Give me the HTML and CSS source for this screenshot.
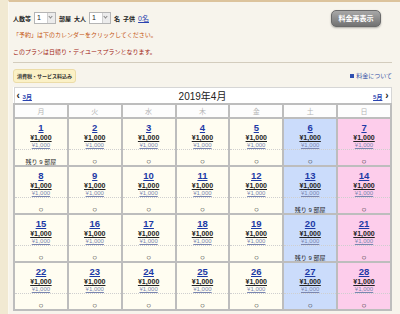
FILE: index.html
```html
<!DOCTYPE html>
<html lang="ja">
<head>
    <meta charset="UTF-8">
    <meta name="viewport" content="width=device-width, initial-scale=1.0">
    <title>宿泊カレンダー</title>
    <link rel="stylesheet" href="styles.css">
</head>
<body>
<div class="page">

    <div class="toolbar">
        <div class="guests">
            <span class="label">人数等</span>
            <span class="select"><span class="val">1</span><span class="arrow"></span></span>
            <span class="label">部屋</span>
            <span class="label">大人</span>
            <span class="select"><span class="val">1</span><span class="arrow"></span></span>
            <span class="label">名</span>
            <span class="label">子供</span>
            <a class="kids" href="#">0名</a>
        </div>
        <button class="refresh">料金再表示</button>
    </div>

    <p class="notice">「予約」は下のカレンダーをクリックしてください。</p>
    <p class="plan-note">このプランは日帰り・デイユースプランとなります。</p>

    <hr class="rule">

    <div class="cal-meta">
        <span class="tax-tag">消費税・サービス料込み</span>
        <a class="price-info" href="#"><span class="info-icon"></span>料金について</a>
    </div>

    <table class="calendar">
        <thead>
            <tr class="month-nav">
                <th colspan="7">
                    <div class="nav">
                        <span class="prev">&lsaquo; <a href="#">3月</a></span>
                        <span class="current">2019年4月</span>
                        <span class="next"><a href="#">5月</a> &rsaquo;</span>
                    </div>
                </th>
            </tr>
            <tr class="weekdays">
                <th>月</th><th>火</th><th>水</th><th>木</th><th>金</th><th>土</th><th>日</th>
            </tr>
        </thead>
        <tbody id="weeks"></tbody>
    </table>

</div>

<script>
    const rooms = { 1: '残り 9 部屋', 13: '残り 9 部屋', 20: '残り 9 部屋' };
    const tbody = document.getElementById('weeks');
    let html = '';
    for (let day = 1; day <= 28; day++) {
        const col = (day - 1) % 7;
        if (col === 0) html += '<tr>';
        let cls = 'weekday';
        if (col === 5) cls = 'sat';
        if (col === 6) cls = 'sun';
        const status = rooms[day]
            ? '<span class="left">' + rooms[day] + '</span>'
            : '<span class="ok">○</span>';
        html += '<td class="' + cls + '">' +
            '<div class="day-top">' +
            '<a class="num" href="#">' + day + '</a>' +
            '<a class="price" href="#">¥1,000</a>' +
            '<a class="price-sub" href="#">¥1,000</a>' +
            '</div>' +
            '<div class="status">' + status + '</div>' +
            '</td>';
        if (col === 6) html += '</tr>';
    }
    tbody.innerHTML = html;
</script>
</body>
</html>
```

FILE: styles.css
```css
body {
    margin: 0;
    padding: 0;
    background-color: #f1e9d2;
    font-family: 'Liberation Sans', 'Noto Sans CJK JP', sans-serif;
    color: #222;
}
.page {
    margin-left: 8px;
    border-left: 1px solid #fbf8f0;
    border-top: 2px solid #dcc39c;
    background-color: #f7f4ec;
    padding: 7px 8px 0 4px;
    min-height: 320px;
}
.toolbar {
    display: flex;
    justify-content: space-between;
    align-items: center;
    height: 18px;
}
.guests {
    display: flex;
    align-items: center;
    gap: 3px;
    font-size: 6px;
}
.label {
    color: #222;
    font-weight: bold;
}
.select {
    display: inline-flex;
    width: 22px;
    height: 12px;
    border: 1px solid #b5b5b5;
    background-color: #fff;
    box-sizing: border-box;
}
.select .val {
    flex: 1;
    font-size: 7px;
    line-height: 10px;
    padding-left: 2px;
}
.select .arrow {
    width: 7px;
    background-color: #ececec;
    border-left: 1px solid #d0d0d0;
    position: relative;
}
.select .arrow::after {
    content: '';
    position: absolute;
    left: 1px;
    top: 2px;
    width: 2px;
    height: 2px;
    border-right: 1px solid #888;
    border-bottom: 1px solid #888;
    transform: rotate(45deg);
}
.kids {
    color: #2a44b0;
    font-size: 7px;
}
.refresh {
    width: 50px;
    height: 17px;
    margin-right: 11px;
    padding: 0;
    border: 1px solid #6a6a6a;
    border-radius: 5px;
    background: linear-gradient(#a8a8a8, #727272);
    box-shadow: 0 1px 2px rgba(0, 0, 0, 0.3);
    color: #fff;
    font-family: 'Noto Sans CJK JP', sans-serif;
    font-size: 7px;
    font-weight: bold;
}
.notice, .plan-note {
    margin: 2px 0 0;
    font-size: 6px;
    line-height: 12px;
}
.notice {
    color: #c4530c;
}
.plan-note {
    margin-top: 5px;
    color: #a02010;
}
.rule {
    margin: 4px 0 0;
    border: none;
    border-top: 1px solid #d3ccbd;
}
.cal-meta {
    display: flex;
    justify-content: space-between;
    align-items: center;
    margin-top: 6px;
    height: 13px;
}
.tax-tag {
    display: inline-block;
    height: 12px;
    line-height: 12px;
    padding: 0 3px;
    border: 1px solid #ecdca8;
    border-radius: 3px;
    background-color: #fbf1c6;
    font-size: 5px;
    font-weight: bold;
    color: #333;
}
.price-info {
    display: flex;
    align-items: center;
    gap: 2px;
    font-size: 6px;
    color: #3a55a8;
    text-decoration: none;
}
.info-icon {
    width: 4px;
    height: 4px;
    background-color: #2f50b0;
}
.calendar {
    width: 100%;
    margin-top: 5px;
    border-collapse: collapse;
    table-layout: fixed;
    background-color: #fff;
}
.calendar th, .calendar td {
    padding: 0;
    border: 2px solid #bdbdbd;
    text-align: center;
    font-weight: normal;
}
.month-nav th {
    height: 15px;
    border: 1px solid #d6d6d6;
    background-color: #fff;
}
.nav {
    display: flex;
    justify-content: space-between;
    align-items: center;
    padding: 0 2px;
}
.prev, .next {
    font-size: 10px;
    font-weight: bold;
    color: #222;
}
.prev a, .next a {
    font-size: 6px;
    color: #2a44b0;
}
.current {
    font-size: 10px;
    color: #222;
}
.weekdays th {
    height: 12px;
    font-size: 7px;
    color: #b5b5b5;
    background-color: #fdfdfd;
}
.weekday {
    background-color: #fffdf1;
}
.sat {
    background-color: #cbdcfb;
}
.sun {
    background-color: #fdcdeb;
}
.day-top {
    height: 27px;
    padding-top: 3px;
    border-bottom: 1px dotted #cfcfcf;
    display: flex;
    flex-direction: column;
    align-items: center;
}
.num {
    font-size: 9.5px;
    font-weight: bold;
    line-height: 11px;
    color: #1d3aa6;
}
.price {
    font-size: 7px;
    font-weight: bold;
    line-height: 9px;
    color: #222;
}
.price-sub {
    font-size: 6px;
    line-height: 7px;
    color: #7a86b0;
}
.status {
    height: 15px;
    line-height: 17px;
    color: #222;
}
.left {
    font-size: 6px;
}
.ok {
    font-size: 8px;
}
```
